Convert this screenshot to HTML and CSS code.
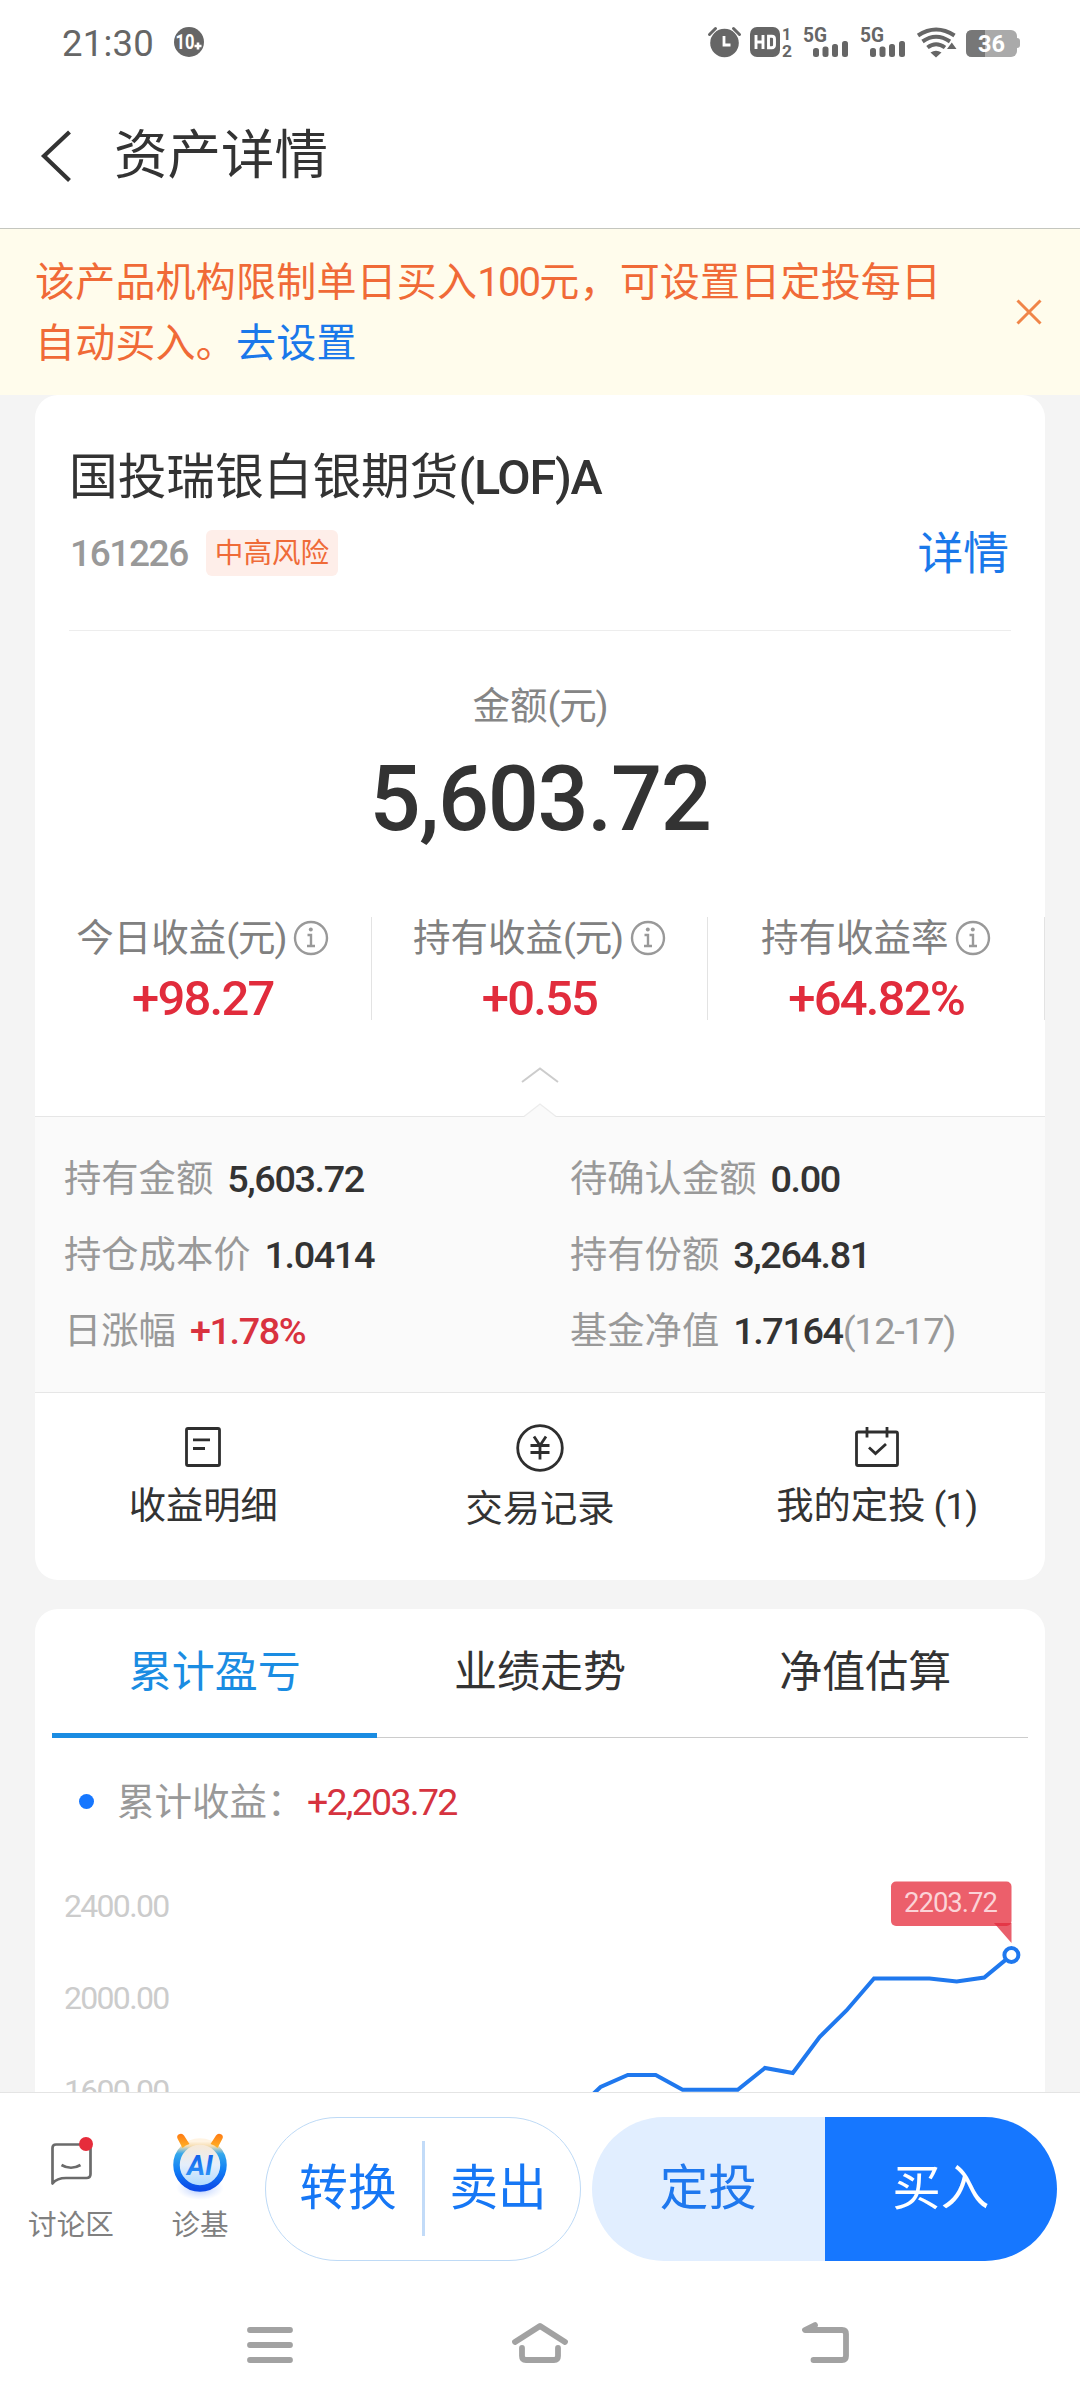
FILE: index.html
```html
<!DOCTYPE html>
<html lang="zh-CN">
<head>
<meta charset="utf-8">
<title>资产详情</title>
<link rel="stylesheet" href="styles.css">
</head>
<body>
<div class="screen">
  <div class="status">
    <span class="clock">21:30</span>
    <svg class="status-badge" width="30" height="30" viewBox="0 0 30 30"><circle cx="15" cy="15" r="15" fill="#666"/><text class="t-badge" x="1.5" y="22" textLength="19" lengthAdjust="spacingAndGlyphs">10</text><path d="M24 15.5v7M20.5 19h7" stroke="#fff" stroke-width="2.6"/></svg>
    <svg class="status-icons" width="312" height="31" viewBox="708 27 312 31" fill="#666">
      <circle cx="724.5" cy="43" r="14.3"/><path d="M709.5 34.5l6-6M733.5 28.5l6 6" stroke="#666" stroke-width="3" stroke-linecap="round"/><path d="M724 36v9h6.5" fill="none" stroke="#fff" stroke-width="2.8"/>
      <rect x="750" y="27" width="30" height="30" rx="7"/>
      <path d="M756 35v14M763 35v14M756 42h7M768.5 36.3h3.3q2.7 0 2.7 2.7v6q0 2.7-2.7 2.7h-3.3z" fill="none" stroke="#fff" stroke-width="2.9"/>
      <text class="t-tiny" x="782" y="39.5">1</text><text class="t-tiny" x="782" y="57" textLength="10" lengthAdjust="spacingAndGlyphs">2</text>
      <text class="t-5g" x="803" y="41.500" textLength="24" lengthAdjust="spacingAndGlyphs">5G</text>
      <rect x="813" y="48" width="6" height="9" rx="2.5"/><rect x="822.5" y="46.5" width="6" height="10.5" rx="2.5"/><rect x="832" y="44" width="6" height="13" rx="2.5"/><rect x="842" y="41" width="6" height="16" rx="2.5"/>
      <text class="t-5g" x="860" y="41.500" textLength="24" lengthAdjust="spacingAndGlyphs">5G</text>
      <rect x="870" y="48" width="6" height="9" rx="2.5"/><rect x="879.5" y="46.5" width="6" height="10.5" rx="2.5"/><rect x="889" y="44" width="6" height="13" rx="2.5"/><rect x="899" y="41" width="6" height="16" rx="2.5"/>
      <path d="M918 35.5q18-12 36.5 0M922.5 41.5q13.5-9.5 27.5 0M927.5 47.5q8.5-6.5 17.5 0" fill="none" stroke="#666" stroke-width="4"/><path d="M930.5 52.5q5.5-3.5 11 0l-5.5 5zM956.5 49h-9.5l4.8-6.5z"/>
      <rect x="966" y="30" width="51" height="27" rx="6" fill="#aaa"/><path d="M972 30h13v27h-13q-6 0-6-6v-15q0-6 6-6z" fill="#777"/><path d="M1017 38q3 0 3 3v4q0 3-3 3z" fill="#aaa"/>
      <text class="t-batt" x="978" y="52" textLength="27" lengthAdjust="spacingAndGlyphs">36</text>
    </svg>
  </div>

  <header class="header">
    <svg width="32" height="54" viewBox="0 0 32 54"><path d="M28.5 3L3 27l25.5 24.5" fill="none" stroke="#333" stroke-width="4.2"/></svg>
    <h1>资产详情</h1>
  </header>

  <div class="notice">
    <p>该产品机构限制单日买入<span class="n100">100</span>元，可设置日定投每日自动买入。<a>去设置</a></p>
    <svg width="26" height="26" viewBox="0 0 26 26"><path d="M1.5 1.5l23 23M24.5 1.5l-23 23" stroke="#f08548" stroke-width="3"/></svg>
  </div>

  <main class="content">
    <section class="card">
      <div class="fund">
        <h2>国投瑞银白银期货<span class="lof">(LOF)A</span></h2>
        <div class="fund-meta"><span class="code">161226</span><span class="tag">中高风险</span><a class="more">详情</a></div>
      </div>
      <div class="amount"><span class="amount-label">金额<span class="unit">(元)</span></span><span class="amount-value">5,603.72</span></div>
      <div class="stats">
        <div class="stat"><span class="stat-label">今日收益<span class="unit">(元)</span><svg class="info" viewBox="0 0 36 36"><circle cx="18" cy="18" r="16"/><path d="M14.5 15h3.5v11M14 26h8"/><circle class="dot" cx="17.8" cy="9.5" r="2"/></svg></span><b>+98.27</b></div>
        <div class="stat"><span class="stat-label">持有收益<span class="unit">(元)</span><svg class="info" viewBox="0 0 36 36"><circle cx="18" cy="18" r="16"/><path d="M14.5 15h3.5v11M14 26h8"/><circle class="dot" cx="17.8" cy="9.5" r="2"/></svg></span><b>+0.55</b></div>
        <div class="stat"><span class="stat-label">持有收益率<svg class="info" viewBox="0 0 36 36"><circle cx="18" cy="18" r="16"/><path d="M14.5 15h3.5v11M14 26h8"/><circle class="dot" cx="17.8" cy="9.5" r="2"/></svg></span><b>+64.82%</b></div>
      </div>
      <div class="fold">
        <svg width="40" height="54" viewBox="0 0 40 54"><path d="M2 19L20 5.5l18 13.500" fill="none" stroke="#ccc" stroke-width="2"/><path d="M4 54L20 41l16 13z" fill="#fafafa"/><path d="M4 53.5L20 41l16 12.5" fill="none" stroke="#ececec" stroke-width="1.2"/></svg>
      </div>
      <dl class="detail">
        <div><dt>持有金额</dt><dd>5,603.72</dd></div>
        <div><dt>待确认金额</dt><dd>0.00</dd></div>
        <div><dt>持仓成本价</dt><dd>1.0414</dd></div>
        <div><dt>持有份额</dt><dd>3,264.81</dd></div>
        <div><dt>日涨幅</dt><dd class="up">+1.78%</dd></div>
        <div><dt>基金净值</dt><dd>1.7164<span class="date">(12-17)</span></dd></div>
      </dl>
      <nav class="actions">
        <a><svg width="36" height="40" viewBox="0 0 36 40"><rect x="1.5" y="1.5" width="33" height="37" rx="1.5"/><path d="M8 12.8h17M8 21.5h12"/></svg><span>收益明细</span></a>
        <a class="trade"><svg width="48" height="48" viewBox="0 0 48 48"><circle cx="24" cy="24" r="22.3"/><path d="M18 12.5l6 9 6-9M24 21.5v14M14.5 21.5h19M14.5 28.5h19"/></svg><span>交易记录</span></a>
        <a><svg width="44" height="40" viewBox="0 0 44 40"><rect x="1.5" y="5" width="41" height="33.5" rx="1.5"/><path d="M12 0v10.5M32 0v10.5M14 20.5l6.5 6 10.5-9.5"/></svg><span>我的定投<span class="unit"> (1)</span></span></a>
      </nav>
    </section>

    <section class="card card-chart">
      <div class="tabs"><a class="on">累计盈亏</a><a>业绩走势</a><a>净值估算</a></div>
      <div class="legend"><i></i><span>累计收益：</span><em>+2,203.72</em></div>
      <div class="chart">
        <div class="axis"><span>2400.00</span><span>2000.00</span><span>1600.00</span></div>
        <svg class="plot" width="480" height="223" viewBox="560 1869 480 223">
          <path d="M591 2096L600.6 2087L627.8 2075H655.7L682.6 2089.8H737.7L764.9 2068L792.8 2073L819.6 2037L846.5 2010.5L874 1978.4H929.5L956.7 1981.5L984.2 1977.6L1011.4 1955.1" fill="none" stroke="#1f78ee" stroke-width="4"/>
          <circle cx="1011.4" cy="1955" r="7" fill="#fff" stroke="#1f78ee" stroke-width="4"/>
          <rect x="891" y="1881.5" width="120.5" height="44.5" rx="5" fill="#ec5f6b"/><path d="M994 1923h17.5v20z" fill="#e2293b" fill-opacity=".75"/>
          <text class="t-tip" x="904" y="1911.5" textLength="94">2203.72</text>
        </svg>
      </div>
    </section>
  </main>

  <footer class="bar">
    <a class="tool tool-chat">
      <svg width="50" height="70" viewBox="46 2130 50 70"><path d="M52.5 2182.5V2147q0-3.5 3.5-3.5H86.5q4 0 4 4V2173q0 4-4 4H66q-9 0-13.5 5.5z" fill="none" stroke="#6b6b6b" stroke-width="2.7" stroke-linejoin="round"/><path d="M61.5 2164q9.5 5.5 19 0" fill="none" stroke="#6b6b6b" stroke-width="2.7"/><circle cx="86" cy="2143" r="7" fill="#e62c3b"/></svg>
      <span>讨论区</span>
    </a>
    <a class="tool tool-ai">
      <svg width="60" height="70" viewBox="170 2130 60 70">
        <defs>
          <linearGradient id="ring" x1="0" y1="0" x2="0" y2="1"><stop offset="0" stop-color="#fff3e2"/><stop offset=".1" stop-color="#f6dcae"/><stop offset=".26" stop-color="#35a8ec"/><stop offset=".6" stop-color="#1180f5"/><stop offset="1" stop-color="#0c4be8"/></linearGradient>
          <linearGradient id="face" x1="0" y1="0" x2="0" y2="1"><stop offset="0" stop-color="#fbe8d0"/><stop offset=".5" stop-color="#e4eefb"/><stop offset="1" stop-color="#a9d8ff"/></linearGradient>
          <linearGradient id="horn" x1="0" y1="0" x2="0" y2="1"><stop offset="0" stop-color="#ff7a12"/><stop offset="1" stop-color="#ffb428"/></linearGradient>
          <linearGradient id="word" x1="0" y1="0" x2="0" y2="1"><stop offset="0" stop-color="#0b57e8"/><stop offset="1" stop-color="#35a0fb"/></linearGradient>
          <radialGradient id="glow"><stop offset="0" stop-color="#8fb2ff" stop-opacity=".8"/><stop offset="1" stop-color="#b9ceff" stop-opacity="0"/></radialGradient>
        </defs>
        <ellipse cx="200" cy="2187" rx="24" ry="12" fill="url(#glow)"/>
        <circle cx="200" cy="2164" r="23.5" fill="url(#face)" stroke="url(#ring)" stroke-width="6.500"/>
        <path d="M178.5 2133.500q3.500-2 5.500 1l5.500 8.500q-4 1-7 4l-4.500-8.500q-2-3 .5-5zM221.5 2133.500q-3.500-2-5.500 1l-5.500 8.500q4 1 7 4l4.500-8.500q2-3-.5-5z" fill="url(#horn)"/>
        <text class="t-ai" x="187" y="2174" fill="url(#word)" textLength="26" lengthAdjust="spacingAndGlyphs">AI</text>
      </svg>
      <span>诊基</span>
    </a>
    <div class="pill outline"><a>转换</a><i></i><a>卖出</a></div>
    <div class="pill solid"><a class="plan">定投</a><a class="buy">买入</a></div>
  </footer>

  <div class="sysnav">
    <svg width="46" height="46" viewBox="0 0 46 46"><path d="M3 8h40M3 23h40M3 38h40"/></svg>
    <svg class="home" width="58" height="46" viewBox="0 0 58 46"><path d="M4 20L29 4l25 16M11 26v8q0 4 4 4h28q4 0 4-4v-8"/></svg>
    <svg width="50" height="46" viewBox="0 0 50 46"><path d="M14 3L4 8h37q4 0 4 4v22q0 4-4 4H12.5"/></svg>
  </div>
</div>
</body>
</html>
```

FILE: styles.css
```css
* { box-sizing: border-box; margin: 0; padding: 0; }
body {
  width: 1080px;
  background: #fff;
  color: #333;
  font-family: Roboto, "Noto Sans CJK SC", sans-serif;
}
.screen { display: flex; flex-direction: column; width: 1080px; height: 2408px; overflow: hidden; }
svg { display: block; flex: none; overflow: visible; }
a { color: inherit; text-decoration: none; }

/* system status bar */
.status { display: flex; align-items: center; height: 84px; padding: 0 60px 0 62px; }
.clock { width: 112px; color: #666; font-size: 36.5px; line-height: 40px; letter-spacing: .2px; padding-top: 3px; }
.status-icons { margin-left: auto; }
.status svg text { font-family: Roboto, sans-serif; font-weight: 700; }
.t-badge { font-size: 20px; fill: #fff; }
.t-tiny { font-size: 16px; }
.t-5g { font-size: 19.5px; }
.t-batt { font-size: 24px; fill: #fff; }

/* page header */
.header { display: flex; align-items: center; height: 145px; padding: 0 40px 0 41px; border-bottom: 1px solid #c4c6bf; }
.header h1 { margin-left: 41px; font-size: 53.5px; font-weight: 400; line-height: 70px; }

/* notice banner */
.notice { display: flex; align-items: center; justify-content: space-between; height: 166px; padding: 0 38px 0 35px; background: #fffcec; color: #f06a37; }
.notice p { width: 920px; font-size: 40px; line-height: 61px; letter-spacing: .2px; padding-top: 2px; }
.notice .n100 { letter-spacing: -1.8px; }
.notice a { color: #1a78ea; }

.content { height: 1697px; padding: 0 35px; background: #f4f4f4; overflow: hidden; }
.card { height: 1185px; background: #fff; border-radius: 23px; overflow: hidden; }

/* fund title */
.fund { height: 236px; margin: 0 34px; padding: 48px 2px 0 0; border-bottom: 1px solid #ededed; }
.fund h2 { font-size: 48.7px; line-height: 70px; font-weight: 400; white-space: nowrap; }
.lof { font-size: 48.5px; font-weight: 500; letter-spacing: -1.3px; }
.fund-meta { display: flex; align-items: center; height: 80px; }
.code { width: 137px; padding: 2px 0 0 1px; color: #999; font-size: 37px; font-weight: 500; letter-spacing: -1.4px; line-height: 46px; }
.tag { height: 46px; width: 132px; border-radius: 6px; background: #feeee9; color: #ef6b38; font-size: 28.6px; line-height: 47px; text-align: center; white-space: nowrap; }
.more { margin-left: auto; color: #1a78ea; font-size: 45.8px; line-height: 60px; padding-top: 3px; }
.unit { letter-spacing: -1.1px; white-space: pre; }

/* total amount */
.amount { display: flex; flex-direction: column; align-items: center; height: 286px; padding-top: 49px; }
.amount-label { color: #858585; font-size: 37.5px; line-height: 52px; }
.amount-value { font-size: 90px; font-weight: 500; line-height: 104px; letter-spacing: -1.4px; margin-top: 16px; }

/* earnings columns */
.stats { display: grid; grid-template-columns: repeat(3, 1fr); height: 103px; }
.stat { display: flex; flex-direction: column; align-items: center; height: 103px; border-right: 1px solid #e3e3e3; }
.stat-label { display: flex; align-items: center; height: 42px; color: #808080; font-size: 37.5px; line-height: 42px; white-space: nowrap; }
.info { width: 36px; height: 36px; margin-left: 7px; fill: none; stroke: #999; stroke-width: 2.4; }
.info .dot { fill: #999; stroke: none; }
.stat b { color: #e12c3c; font-size: 49px; font-weight: 500; line-height: 60px; letter-spacing: -1.8px; margin: 10px 0 -9px; }

.fold { display: flex; justify-content: center; align-items: flex-end; height: 96px; }
.fold svg { margin-bottom: -1px; position: relative; z-index: 1; }

/* holding details */
.detail { display: grid; grid-template-columns: 506px 1fr; grid-auto-rows: 76px; height: 277px; padding: 24px 0 0 29px; background: #fafafa; border-top: 1px solid #e6e6e6; border-bottom: 1px solid #e6e6e6; }
.detail div { display: flex; align-items: center; gap: 14px; font-size: 37.3px; line-height: 50px; white-space: nowrap; }
.detail dt { color: #999; }
.detail dd { font-size: 37.8px; font-weight: 500; letter-spacing: -1.4px; }
.detail .up { color: #d9323f; }
.detail .date { color: #999; font-weight: 400; letter-spacing: -1.3px; }

/* quick actions */
.actions { display: grid; grid-template-columns: repeat(3, 1fr); padding-top: 34px; }
.actions a { display: flex; flex-direction: column; align-items: center; font-size: 37.3px; line-height: 50px; gap: 14px; white-space: nowrap; }
.actions .trade { margin-top: -3px; gap: 12px; }
.actions svg { fill: none; stroke: #2e2e2e; stroke-width: 2.8; }

/* chart card */
.card-chart { height: 600px; margin-top: 29px; padding: 0 17px; border-radius: 23px 23px 0 0; }
.tabs { display: grid; grid-template-columns: repeat(3, 1fr); height: 129px; border-bottom: 1px solid #ccc; }
.tabs a { height: 129px; padding-top: 33px; text-align: center; font-size: 43px; line-height: 60px; }
.tabs .on { color: #1a8ce2; border-bottom: 5px solid #1a8ce2; }
.legend { display: flex; align-items: center; height: 131px; padding: 0 0 4px 27px; font-size: 37.5px; line-height: 50px; }
.legend i { width: 15px; height: 15px; border-radius: 50%; background: #1677ff; }
.legend span { width: 190px; margin-left: 23px; color: #999; white-space: nowrap; }
.legend em { color: #d6333f; font-style: normal; letter-spacing: -1.7px; }
.chart { display: flex; justify-content: space-between; margin-right: -12px; }
.axis { display: flex; flex-direction: column; padding-left: 12px; color: #ccc; font-size: 32px; line-height: 92.3px; letter-spacing: -1.7px; margin-top: -9px; }
.t-tip { font-size: 27.5px; fill: #fbd3d7; }

/* bottom action bar */
.bar { display: flex; align-items: center; height: 192px; padding-right: 23px; background: #fff; border-top: 1px solid #e4e4e4; }
.tool { display: flex; flex-direction: column; align-items: center; width: 100px; height: 154px; padding-top: 19px; color: #808080; font-size: 28.6px; line-height: 40px; gap: 4px; }
.tool-chat { margin-left: 21px; }
.tool-ai { margin-left: 29px; }
.t-ai { font-size: 27px; font-weight: 700; font-style: italic; }
.pill { display: flex; align-items: center; height: 144px; border-radius: 72px; overflow: hidden; font-size: 48.6px; line-height: 144px; }
.outline { width: 316px; margin-left: 15px; border: 1px solid #bedaf6; color: #1677f5; justify-content: center; gap: 25px; }
.outline i { width: 3px; height: 95px; background: #c2dbf8; }
.solid { width: 465px; margin-left: auto; }
.solid a { flex: 1; height: 144px; text-align: center; }
.plan { background: #e1eeff; color: #1f78ee; }
.buy { background: #1677ff; color: #fff; }

/* system navigation */
.sysnav { display: flex; padding: 38px 0 0 247px; }
.sysnav svg { fill: none; stroke: #a2a2a2; stroke-width: 5.8; stroke-linecap: round; stroke-linejoin: round; }
.sysnav .home { margin: 0 232px 0 218px; }
```
